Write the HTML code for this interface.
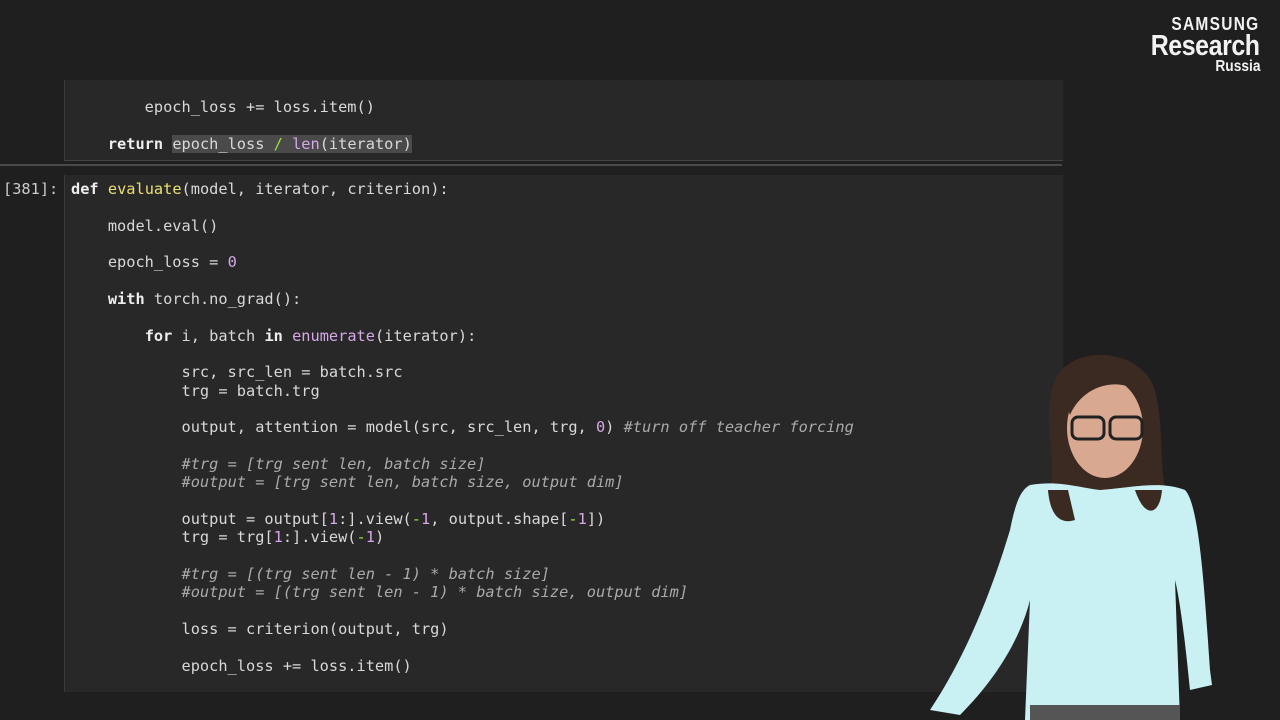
<!DOCTYPE html>
<html><head><meta charset="utf-8"><style>
html,body{margin:0;padding:0;width:1280px;height:720px;overflow:hidden;background:#1f1f1f;position:relative}
.cell{position:absolute;background:#282828;left:64px;width:998px}
pre{margin:0;position:absolute;font-family:"DejaVu Sans Mono","Liberation Mono",monospace;font-size:15.3px;line-height:18.33px;color:#d8d8d8;white-space:pre;letter-spacing:0}
.k{font-weight:bold;color:#eeeeee}
.f{color:#e8e070}
.b{color:#d6a8e8}
.n{color:#d6a8e8}
.g{color:#9be03a}
.c{color:#aaaaaa;font-style:italic}
.sel{background:#4a4a4a}
.logo{position:absolute;right:20px;font-family:"Liberation Sans",sans-serif;color:#f2f2f2;font-weight:bold;text-align:right;transform:scaleX(0.86);transform-origin:right center}
</style></head><body>
<div class="cell" style="top:80px;height:80px;border-left:1px solid #3a3a3a;border-bottom:1px solid #444"></div>
<div style="position:absolute;left:0;top:164px;width:1062px;height:2px;background:#4a4a4a"></div>
<div class="cell" style="top:175px;height:517px;border-left:1px solid #3a3a3a"></div>
<pre style="left:71px;top:98px">        epoch_loss += loss.item()

    <span class="k">return</span> <span class="sel">epoch_loss <span class="g">/</span> <span class="b">len</span>(iterator)</span></pre>
<pre style="left:3px;top:180px;color:#cccccc">[381]:</pre>
<pre style="left:71px;top:180px"><span class="k">def</span> <span class="f">evaluate</span>(model, iterator, criterion):

    model.eval()

    epoch_loss = <span class="n">0</span>

    <span class="k">with</span> torch.no_grad():

        <span class="k">for</span> i, batch <span class="k">in</span> <span class="b">enumerate</span>(iterator):

            src, src_len = batch.src
            trg = batch.trg

            output, attention = model(src, src_len, trg, <span class="n">0</span>) <span class="c">#turn off teacher forcing</span>

            <span class="c">#trg = [trg sent len, batch size]</span>
            <span class="c">#output = [trg sent len, batch size, output dim]</span>

            output = output[<span class="n">1</span>:].view(<span class="g">-</span><span class="n">1</span>, output.shape[<span class="g">-</span><span class="n">1</span>])
            trg = trg[<span class="n">1</span>:].view(<span class="g">-</span><span class="n">1</span>)

            <span class="c">#trg = [(trg sent len - 1) * batch size]</span>
            <span class="c">#output = [(trg sent len - 1) * batch size, output dim]</span>

            loss = criterion(output, trg)

            epoch_loss += loss.item()</pre>
<div class="logo" style="top:14px;font-size:18px;letter-spacing:1.5px">SAMSUNG</div>
<div class="logo" style="top:30px;font-size:29px;letter-spacing:-0.5px">Research</div>
<div class="logo" style="top:58px;font-size:16px">Russia</div>
<svg style="position:absolute;left:900px;top:340px" width="340" height="380" viewBox="0 0 340 380">
<path d="M155 40 C170 5 240 5 255 50 C265 90 258 130 268 160 L235 175 L200 160 L150 150 C158 120 140 80 155 40Z" fill="#3a2a22"/>
<ellipse cx="205" cy="88" rx="38" ry="50" fill="#d9a890"/>
<path d="M165 60 C180 20 240 20 250 70 L245 60 C230 35 185 40 170 75Z" fill="#3a2a22"/>
<rect x="172" y="77" width="32" height="22" rx="6" fill="none" stroke="#222" stroke-width="3"/>
<rect x="210" y="77" width="32" height="22" rx="6" fill="none" stroke="#222" stroke-width="3"/>
<path d="M130 145 C160 140 180 148 200 150 C230 148 260 140 285 150 C300 165 305 260 310 330 L312 345 L290 350 C285 300 280 260 275 240 L280 380 L125 380 L130 260 C120 300 95 340 60 375 L30 370 C70 310 95 240 110 190 C115 165 120 150 130 145Z" fill="#c9f0f2"/>
<path d="M148 150 C150 175 160 185 175 180 L168 150Z" fill="#3a2a22"/>
<path d="M235 150 C245 180 260 175 262 150Z" fill="#3a2a22"/>
<rect x="130" y="365" width="150" height="15" fill="#555"/>
</svg>
</body></html>
